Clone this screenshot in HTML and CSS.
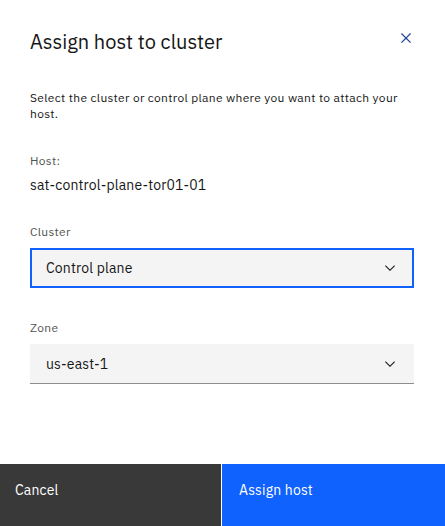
FILE: index.html
```html
<!DOCTYPE html>
<html lang="en">
<head>
<meta charset="utf-8">
<title>Assign host to cluster</title>
<link rel="stylesheet" href="styles.css">
</head>
<body>
<div class="modal">
  <div class="modal-header">
    <h2 class="modal-title">Assign host to cluster</h2>
    <button class="close-btn" aria-label="Close">
      <svg width="20" height="20" viewBox="0 0 32 32" aria-hidden="true"><path d="M24 9.4L22.6 8 16 14.6 9.4 8 8 9.4 14.6 16 8 22.6 9.4 24 16 17.4 22.6 24 24 22.6 17.4 16 24 9.4z"/></svg>
    </button>
  </div>
  <div class="modal-body">
    <p class="desc">Select the cluster or control plane where you want to attach your host.</p>
    <div class="field field-host">
      <div class="label">Host:</div>
      <div class="value">sat-control-plane-tor01-01</div>
    </div>
    <div class="field field-cluster">
      <div class="label">Cluster</div>
      <div class="select focused">
        <span class="select-text">Control plane</span>
        <svg class="chevron" width="16" height="16" viewBox="0 0 16 16" aria-hidden="true"><path d="M8 11L3 6 3.7 5.3 8 9.6 12.3 5.3 13 6z"/></svg>
      </div>
    </div>
    <div class="field field-zone">
      <div class="label">Zone</div>
      <div class="select">
        <span class="select-text">us-east-1</span>
        <svg class="chevron" width="16" height="16" viewBox="0 0 16 16" aria-hidden="true"><path d="M8 11L3 6 3.7 5.3 8 9.6 12.3 5.3 13 6z"/></svg>
      </div>
    </div>
  </div>
  <div class="modal-footer">
    <button class="btn btn-secondary">Cancel</button>
    <button class="btn btn-primary">Assign host</button>
  </div>
</div>
</body>
</html>
```

FILE: styles.css
```css
* { box-sizing: border-box; }
html, body { margin: 0; padding: 0; background: #fff; }
body {
  font-family: "IBM Plex Sans", Inter, "Noto Sans", sans-serif;
  color: #161616;
}
.modal {
  width: 445px;
  height: 526px;
  display: flex;
  flex-direction: column;
  overflow: hidden;
}
.modal-header {
  display: flex;
  justify-content: space-between;
  align-items: flex-start;
  padding: 28px 29px 0 30px;
}
.modal-title {
  margin: 0;
  font-size: 20px;
  line-height: 28px;
  font-weight: 400;
  letter-spacing: 0;
}
.close-btn {
  border: 0;
  background: transparent;
  padding: 0;
  margin-top: 0;
  width: 20px;
  height: 20px;
  fill: #23449a;
  cursor: pointer;
}
.close-btn svg { display: block; }
.modal-body {
  flex: 1;
  padding: 0 31px 0 30px;
}
.desc {
  margin: 34px 0 0;
  max-width: 376px;
  font-size: 12px;
  line-height: 16px;
  letter-spacing: 0.32px;
  color: #161616;
}
.label {
  font-size: 12px;
  line-height: 16px;
  letter-spacing: 0.32px;
  color: #525252;
}
.field-host { margin-top: 31px; }
.value {
  margin-top: 7px;
  font-size: 14px;
  line-height: 18px;
  letter-spacing: 0.16px;
}
.field-cluster { margin-top: 30px; }
.field-zone { margin-top: 32px; }
.select {
  margin-top: 8px;
  height: 40px;
  background: #f4f4f4;
  display: flex;
  align-items: center;
  justify-content: space-between;
  padding: 0 16px;
  border-bottom: 1px solid #8d8d8d;
  font-size: 14px;
  letter-spacing: 0.16px;
}
.select.focused {
  border: 2px solid #0f62fe;
  padding: 0 14px;
}
.chevron { fill: #161616; display: block; }
.modal-footer {
  display: flex;
  gap: 1px;
  height: 62px;
}
.btn {
  flex: 1;
  border: 0;
  margin: 0;
  font-family: inherit;
  font-size: 14px;
  line-height: 18px;
  letter-spacing: 0.16px;
  color: #fff;
  text-align: left;
  display: flex;
  align-items: flex-start;
  padding: 17px 15px 0;
}
.btn-secondary { background: #393939; }
.btn-primary { background: #0f62fe; padding-left: 17px; }
```
